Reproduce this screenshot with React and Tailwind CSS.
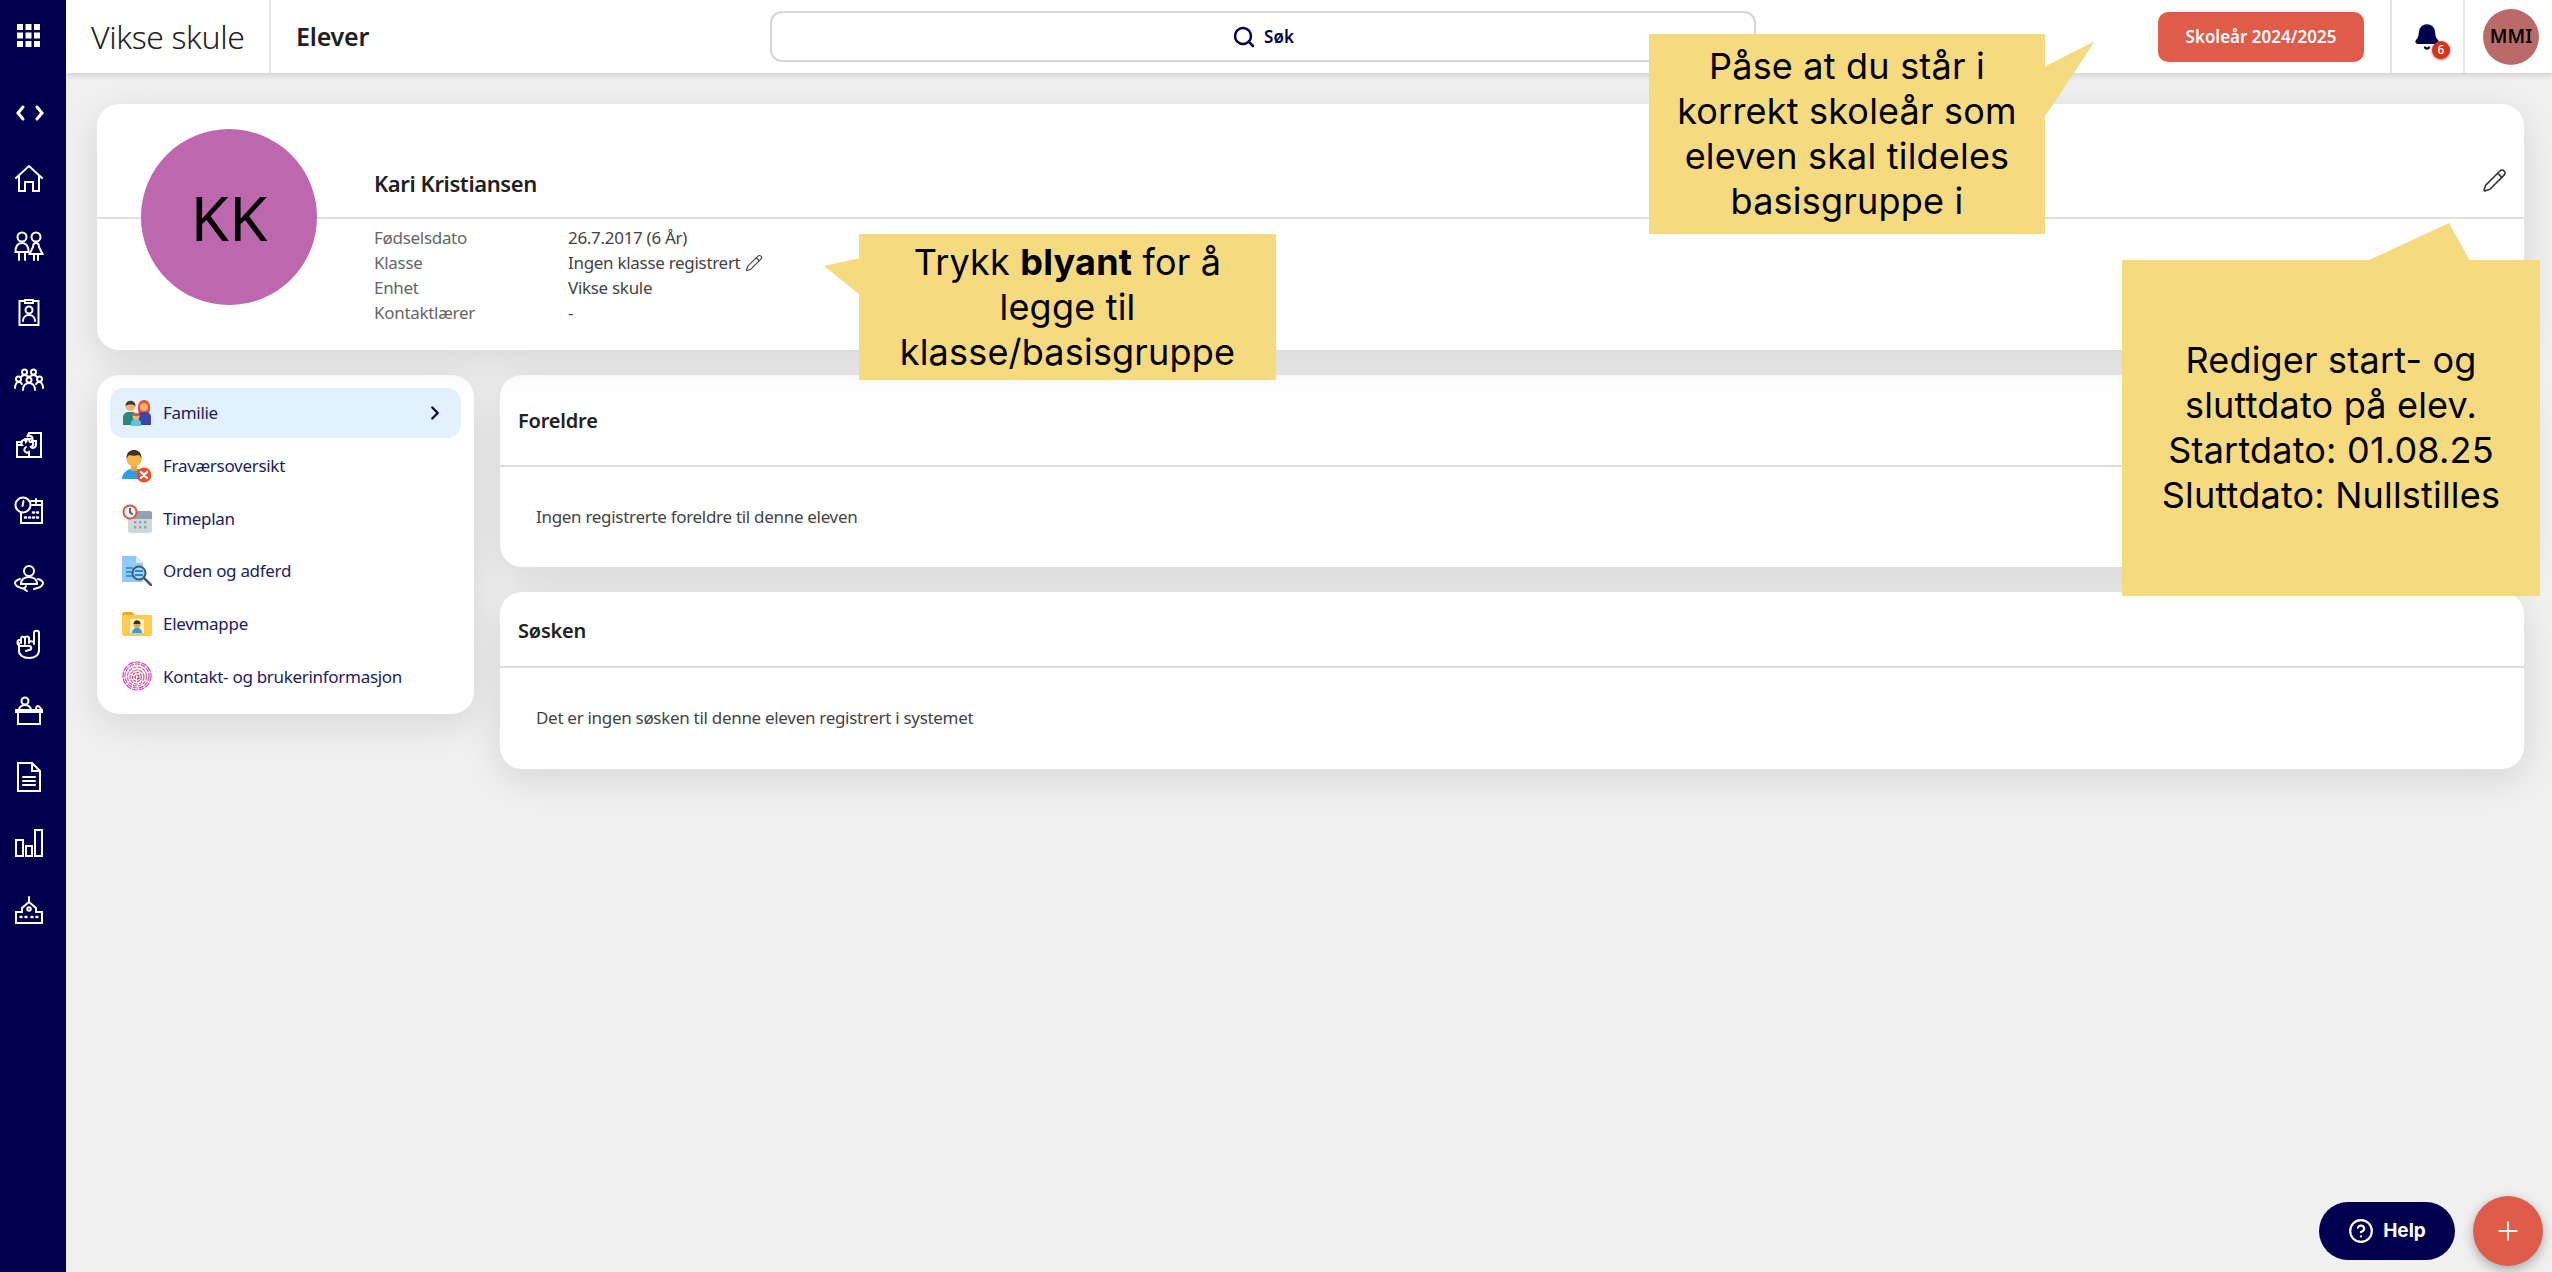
import { Bell, ChevronRight, CircleHelp, Pencil, Plus, Search } from 'lucide-react'

const navyIcon = {
  fill: 'none',
  stroke: 'white',
  strokeWidth: 2,
  strokeLinecap: 'round',
  strokeLinejoin: 'miter'
}

// Sidebar icons, drawn on a 30x30 grid
function SideIcon({ children }) {
  return (
    <svg viewBox="0 0 30 30" width="30" height="30" {...navyIcon}>
      {children}
    </svg>
  )
}

const sideIcons = [
  <>
    <path d="M9 9l-5 6 5 6" strokeWidth="3" />
    <path d="M23 9l5 6-5 6" strokeWidth="3" />
  </>,
  <path d="M2 14 15 2l13 12M5 12v15h6v-9h8v9h6V12" />,
  <>
    <circle cx="8" cy="6" r="4.500" />
    <circle cx="22" cy="6" r="4.500" />
    <path d="M1.500 21c0-7 3-9 6.500-9s6.500 2 6.500 9H1.500zM5 21v8M11 21v8" />
    <path d="M22 12c-2 0-3 2-3 4l-3.500 7h13l-3.500-7c0-2-1-4-3-4zM20 23v6M24 23v6" />
  </>,
  <>
    <path d="M10 4H5.500V28h19V4H20" />
    <path d="M11 6V3h8v3z" />
    <circle cx="15" cy="13" r="3.500" />
    <path d="M9 24c0-4 3-6 6-6s6 2 6 6" />
  </>,
  <>
    <circle cx="10.500" cy="8" r="2.500" />
    <circle cx="19.500" cy="8" r="2.500" />
    <circle cx="4.500" cy="15" r="2.500" />
    <circle cx="15" cy="16" r="2.500" />
    <circle cx="25.500" cy="15" r="2.500" />
    <path d="M1 24c0-3 1.500-6 3.500-6s3 1 3.500 2M29 24c0-3-1.500-6-3.500-6s-3 1-3.500 2M9 26c0-4 2.500-7 6-7s6 3 6 7M7 13c1-1.500 2-2 3.500-2s3 1 4.500 2c1.500-1 3-2 4.500-2s2.500.5 3.500 2" />
  </>,
  <path d="M15 3h12v24H3V15h5c-3-4 3-7 4-3 1-1 1-2 0-3h4c-1 1-1 2 0 3 3-1 5 3 1 5 2 2 5 0 5-2v-4h-4c2-4-2-7-5-4zM3 15v-3h5M15 27v-5c-3 2-7-2-3-5" />,
  <>
    <circle cx="9" cy="9" r="7.500" />
    <path d="M9.500 5 8.500 10" />
    <path d="M17 5h11v22H7V17" />
    <path d="M18 9h10M22 3v4" />
    <path d="M11 21.500h1M15 21.500h1M19 21.500h1M23 21.500h1M19 16.500h1M23 16.500h1" strokeWidth="2.500" />
  </>,
  <>
    <circle cx="15" cy="8" r="5" />
    <path d="M7 21c0-5 4-7 8-7s8 2 8 7H7z" />
    <path d="M6 16c-3 1-5 2-5 4 0 3 5 5 10 6M24 16c3 1 5 2 5 4 0 3-4 5-9 6M12 23l-2 3 3 2" />
  </>,
  <>
    <path d="M5 14v8c0 4 4 7 10 7s10-3 10-8V4c0-3-5-3-5 0v11" />
    <path d="M5 16c-2 0-2-5 0-5s2 0 2 2M7 14v-4c0-3 4-3 4 0v5M11 13v-4c0-2 4-2 4 0v5" />
    <path d="M15 13c1-1 5-1 5 1" />
    <path d="M6 17h9c3 0 3 4 0 4l-3 1" />
  </>,
  <>
    <rect x="2" y="14" width="26" height="2" />
    <rect x="4" y="16" width="22" height="12" />
    <circle cx="11" cy="5" r="3.500" />
    <path d="M5 14c0-3 3-5 6-5s6 2 6 5M22 14c0-3 1-4 2-4s2 1 3 3" />
  </>,
  <>
    <path d="M4 1h14l8 8v20H4zM18 1v8h8" />
    <path d="M9 15h12M9 19h12M9 23h12" />
  </>,
  <>
    <rect x="2" y="12" width="7" height="16" />
    <rect x="12" y="18" width="6" height="10" />
    <rect x="21" y="2" width="7" height="26" />
  </>,
  <>
    <path d="M2 28V17h6v-4l7-6 7 6v4h6v11z" />
    <path d="M15 7V2" />
    <circle cx="15" cy="14" r="1.800" />
    <path d="M6.500 22h1M11.500 22h1M17.500 22h1M22.500 22h1" strokeWidth="2.400" />
  </>
]

function GridIcon() {
  return (
    <svg viewBox="0 0 23 23" width="23" height="23" fill="white">
      {[0, 8.5, 17].map(y =>
        [0, 8.5, 17].map(x => <rect key={`${x}-${y}`} x={x} y={y} width="6" height="6" />)
      )}
    </svg>
  )
}

function FamilyIcon() {
  return (
    <svg viewBox="0 0 30 30" width="30" height="30">
      <path d="M1 27v-8c0-3 3-5 6-5h3c3 0 5 2 5 5v8z" fill="#26897a" />
      <circle cx="8.500" cy="8" r="5" fill="#f6b26b" />
      <path d="M3.500 8c0-7 10-7 10 0-3-2-7-2-10 0z" fill="#4a3a33" />
      <path d="M17 15c-2-3-2-13 5-13s7 10 5 13z" fill="#e8532f" />
      <path d="M14 27V19c0-3 3-5 8-5s7 2 7 5v8z" fill="#3b44a8" />
      <circle cx="22" cy="9" r="4" fill="#f6b26b" />
      <path d="M9 28v-3c0-2 2-4 5-4s5 2 5 4v3z" fill="#5ec3dc" />
      <circle cx="14" cy="18.500" r="3.500" fill="#f6b26b" />
      <path d="M10.500 18c0-4 7-4 7 0z" fill="#e8532f" />
    </svg>
  )
}

function AbsenceIcon() {
  return (
    <svg viewBox="0 0 30 36" width="30" height="36">
      <path d="M0 31c0-6 5-9 8-10h8c3 1 6 3 6 10z" fill="#2f9ee6" />
      <rect x="9" y="17" width="6" height="6" fill="#f0a13c" />
      <circle cx="12" cy="11" r="7.500" fill="#f8b64c" />
      <path d="M4.500 11c-1-12 16-12 15 0-1-3-2-4-3-4-3 1-6 1-9 0-2 1-2 2-3 4z" fill="#3d2f2a" />
      <circle cx="22" cy="27" r="7.500" fill="#f04e23" />
      <path d="M19 24l6 6M25 24l-6 6" stroke="white" strokeWidth="2.400" strokeLinecap="round" />
    </svg>
  )
}

function ScheduleIcon() {
  return (
    <svg viewBox="0 0 30 30" width="30" height="30">
      <rect x="6" y="7" width="24" height="22" rx="2.500" fill="#cfd8dc" />
      <path d="M6 15V9.500C6 8 7 7 8.500 7h19C29 7 30 8 30 9.500V15z" fill="#90a4ae" />
      <g fill="#90a4ae">
        <rect x="12" y="17" width="2.400" height="2.400" />
        <rect x="17" y="17" width="2.400" height="2.400" />
        <rect x="22" y="17" width="2.400" height="2.400" />
        <rect x="12" y="22" width="2.400" height="2.400" />
        <rect x="17" y="22" width="2.400" height="2.400" />
        <rect x="22" y="22" width="2.400" height="2.400" />
      </g>
      <circle cx="8" cy="8" r="6.500" fill="white" stroke="#e5533d" strokeWidth="2" />
      <path d="M8 4v4.500l3 2" fill="none" stroke="#455a64" strokeWidth="1.800" />
    </svg>
  )
}

function ConductIcon() {
  return (
    <svg viewBox="0 0 30 30" width="30" height="30">
      <path d="M0 0h14l7 7v19H0z" fill="#90caf9" />
      <path d="M14 0l7 7h-7z" fill="#d6eafc" />
      <path d="M4 12h7M4 16h6M4 20h7" stroke="#1e88e5" strokeWidth="1.600" />
      <circle cx="17" cy="17" r="6.500" fill="#a7d5f7" stroke="#455a64" strokeWidth="2" />
      <path d="M13 15h8M13 19h8" stroke="#1e88e5" strokeWidth="2" />
      <path d="M22 22l7 7" stroke="#455a64" strokeWidth="2.600" strokeLinecap="round" />
    </svg>
  )
}

function FolderIcon() {
  return (
    <svg viewBox="0 0 30 24" width="30" height="24">
      <path d="M0 2.500C0 1 1 0 2.500 0H10l3 3h15c1 0 2 1 2 2v3H0z" fill="#f9a825" />
      <rect x="0" y="3" width="30" height="21" rx="2" fill="#fdcb4d" />
      <rect x="8" y="7" width="14" height="14" fill="#fff3c4" />
      <path d="M10 21c0-3 2-5 5-5s5 2 5 5z" fill="#2f9ee6" />
      <circle cx="15" cy="12.500" r="3.500" fill="#e9a24a" />
      <path d="M11.500 12c0-5 7-5 7 0z" fill="#3d2f2a" />
    </svg>
  )
}

function FingerprintIcon() {
  return (
    <svg viewBox="0 0 30 30" width="30" height="30" fill="none" strokeWidth="1.200">
      <circle cx="15" cy="16" r="2" stroke="#c2185b" strokeDasharray="3 1" />
      <circle cx="15" cy="16" r="4.500" stroke="#c9406e" strokeDasharray="3 1" />
      <circle cx="15" cy="16" r="7" stroke="#d0557c" strokeDasharray="4 1" />
      <circle cx="15" cy="15.500" r="9.500" stroke="#d4618a" strokeDasharray="4 1" />
      <circle cx="15" cy="15" r="12" stroke="#d048b8" strokeDasharray="5 1" />
      <circle cx="15" cy="15" r="14" stroke="#d63ad0" strokeDasharray="6 1" />
    </svg>
  )
}

const navItems = [
  { label: 'Familie', icon: <FamilyIcon />, active: true },
  { label: 'Fraværsoversikt', icon: <AbsenceIcon /> },
  { label: 'Timeplan', icon: <ScheduleIcon /> },
  { label: 'Orden og adferd', icon: <ConductIcon /> },
  { label: 'Elevmappe', icon: <FolderIcon /> },
  { label: 'Kontakt- og brukerinformasjon', icon: <FingerprintIcon /> }
]

const studentRows = [
  ['Fødselsdato', '26.7.2017 (6 År)'],
  ['Klasse', 'Ingen klasse registrert'],
  ['Enhet', 'Vikse skule'],
  ['Kontaktlærer', '-']
]

const cardShadow = 'shadow-[0_10px_40px_rgba(0,0,0,0.11)]'

function Sidebar() {
  return (
    <aside className="flex w-[66px] shrink-0 flex-col bg-[#00004f] pl-[13.5px]">
      <div className="mt-[23.5px] mb-[51.500px] ml-[3.500px] h-[23px]">
        <GridIcon />
      </div>
      <div className="flex flex-col gap-[36.400px]">
        {sideIcons.map((icon, i) => (
          <SideIcon key={i}>{icon}</SideIcon>
        ))}
      </div>
    </aside>
  )
}

function Header() {
  return (
    <header className="relative z-10 flex h-[73px] shrink-0 items-stretch bg-white shadow-[0_2px_6px_rgba(0,0,0,0.15)]">
      <div className="flex w-[205px] items-center border-r-2 border-[#e4e4e4] pl-[25px] text-[32px] font-light tracking-[-0.4px] text-[#212121]">
        Vikse skule
      </div>
      <div className="flex w-[499px] items-center pl-[25px] text-[25px] font-semibold tracking-[-0.2px] text-[#212121]">
        Elever
      </div>
      <div className="my-[11px] flex w-[986px] items-center justify-center gap-2 rounded-[12px] border-2 border-[#d6d6d6] text-[#00004f]">
        <Search size={24} strokeWidth={2.5} />
        <span className="text-[17px] font-semibold">Søk</span>
      </div>
      <div className="flex flex-1 items-center justify-end pr-[26px]">
        <button className="h-[50px] w-[206px] rounded-[10px] bg-[#de5c49] text-[17px] font-semibold text-white">
          Skoleår 2024/2025
        </button>
      </div>
      <div className="relative flex w-[75px] items-center justify-center border-x-2 border-[#e4e4e4]">
        <Bell size={28} fill="#00004f" stroke="#00004f" className="mr-[2px]" />
        <span className="absolute top-[41px] left-[40px] flex h-[18px] w-[18px] items-center justify-center rounded-full bg-[#d8321a] text-[12px] font-medium text-white shadow-[0_1px_3px_rgba(0,0,0,0.5)]">
          6
        </span>
      </div>
      <div className="flex w-[87px] items-center pl-[18px]">
        <div className="flex h-[56px] w-[56px] shrink-0 items-center justify-center rounded-full bg-[#bb6a6a] text-[19px] font-semibold text-black">
          MMI
        </div>
      </div>
    </header>
  )
}

function StudentCard() {
  return (
    <section className={`relative h-[246px] rounded-[22px] bg-white ${cardShadow}`}>
      <div className="absolute top-[25px] left-[44px] flex h-[176px] w-[176px] items-center justify-center rounded-full bg-[#bc67ae] text-[62px] text-black">
        KK
      </div>
      <div className="flex h-[115px] items-center justify-between border-b-2 border-[#e0e0e0] pt-[46px] pr-[17px] pl-[277px]">
        <h1 className="text-[22px] font-semibold tracking-[-0.4px] text-[#212121]">Kari Kristiansen</h1>
        <Pencil size={25} strokeWidth={1.500} className="-mt-[6px] text-[#333]" />
      </div>
      <div className="grid grid-cols-[194px_1fr] pt-[6px] pl-[277px] text-[17px] leading-[25px] tracking-[-0.3px]">
        {studentRows.map(([label, value]) => (
          <div key={label} className="contents">
            <span className="text-[#666]">{label}</span>
            <span className="flex items-center gap-[5px] text-[#444]">
              {value}
              {label === 'Klasse' && <Pencil size={18} strokeWidth={1.500} />}
            </span>
          </div>
        ))}
      </div>
    </section>
  )
}

function SideNav() {
  return (
    <nav className={`flex h-[339px] w-[377px] shrink-0 flex-col rounded-[22px] bg-white p-[13px] ${cardShadow}`}>
      {navItems.map(item => (
        <div
          key={item.label}
          className={`flex shrink-0 items-center rounded-[14px] pr-[15px] pl-[12px] text-[17px] tracking-[-0.3px] text-[#1b1b66] ${
            item.active ? 'mb-[1.700px] h-[50px] bg-[#e3f0fd]' : 'h-[52.600px]'
          }`}
        >
          <span className="mr-[11px] flex w-[30px] justify-center">{item.icon}</span>
          <span className="flex-1">{item.label}</span>
          {item.active && <ChevronRight size={22} strokeWidth={2.500} className="text-[#00004f]" />}
        </div>
      ))}
    </nav>
  )
}

function InfoCard({ title, text, headerHeight, height, titlePad }) {
  return (
    <section className={`${height} rounded-[22px] bg-white ${cardShadow}`}>
      <div className={`${headerHeight} ${titlePad} border-b-2 border-[#dcdcdc] pl-[18px] text-[20px] font-semibold tracking-[-0.2px] text-[#212121]`}>
        {title}
      </div>
      <p className="pt-[37px] pl-[36px] text-[17px] tracking-[-0.3px] text-[#444]">{text}</p>
    </section>
  )
}

function Callout({ className, tail, children }) {
  return (
    <div
      className={`absolute z-20 flex items-center justify-center bg-[#f5da80] text-center text-[36px] leading-[45px] tracking-[0.2px] text-black [font-family:Inter,sans-serif] ${className}`}
    >
      {tail}
      <div>{children}</div>
    </div>
  )
}

export default function App() {
  return (
    <div className="relative flex h-[1272px] w-[2552px] overflow-hidden bg-[#f0f0f0] [font-family:'Noto_Sans',sans-serif]">
      <Sidebar />
      <div className="flex min-w-0 flex-1 flex-col">
        <Header />
        <main className="flex flex-col gap-[25px] pt-[31px] pr-[28px] pl-[31px]">
          <StudentCard />
          <div className="flex gap-[26px]">
            <SideNav />
            <div className="flex flex-1 flex-col gap-[25px]">
              <InfoCard
                title="Foreldre"
                text="Ingen registrerte foreldre til denne eleven"
                height="h-[192px]"
                headerHeight="h-[92px]"
                titlePad="pt-[31px]"
              />
              <InfoCard
                title="Søsken"
                text="Det er ingen søsken til denne eleven registrert i systemet"
                height="h-[177px]"
                headerHeight="h-[76px]"
                titlePad="pt-[24px]"
              />
            </div>
          </div>
        </main>
      </div>

      {/* Annotation callouts pasted over the page */}
      <Callout
        className="top-[34px] left-[1649px] h-[200px] w-[396px]"
        tail={
          <svg viewBox="0 0 52 78" width="52" height="78" className="absolute top-[6px] left-[395px]" fill="#f5da80">
            <path d="M0 27 51 1 0 78z" />
          </svg>
        }
      >
        Påse at du står i
        <br />
        korrekt skoleår som
        <br />
        eleven skal tildeles
        <br />
        basisgruppe i
      </Callout>
      <Callout
        className="top-[234px] left-[859px] h-[146px] w-[417px]"
        tail={
          <svg viewBox="0 0 36 64" width="36" height="64" className="absolute top-[22px] -left-[35px]" fill="#f5da80">
            <path d="M36 2 0 10l36 29z" />
          </svg>
        }
      >
        Trykk <b>blyant</b> for å
        <br />
        legge til
        <br />
        klasse/basisgruppe
      </Callout>
      <Callout
        className="top-[260px] left-[2122px] h-[336px] w-[418px]"
        tail={
          <svg viewBox="0 0 104 38" width="104" height="38" className="absolute -top-[37px] left-[245px]" fill="#f5da80">
            <path d="M0 38 82 0l21 38z" />
          </svg>
        }
      >
        Rediger start- og
        <br />
        sluttdato på elev.
        <br />
        Startdato: 01.08.25
        <br />
        Sluttdato: Nullstilles
      </Callout>

      {/* Floating help and add buttons */}
      <button className="absolute top-[1202px] left-[2319px] flex h-[58px] w-[136px] items-center justify-center gap-[9px] rounded-full bg-[#00004f] text-[19px] font-bold text-white [font-family:Inter,sans-serif]">
        <CircleHelp size={26} strokeWidth={2} />
        Help
      </button>
      <button className="absolute top-[1196px] left-[2473px] flex h-[70px] w-[70px] items-center justify-center rounded-full bg-[#de5c49] text-white shadow-[0_4px_12px_rgba(0,0,0,0.3)]">
        <Plus size={30} strokeWidth={1.500} />
      </button>
    </div>
  )
}
